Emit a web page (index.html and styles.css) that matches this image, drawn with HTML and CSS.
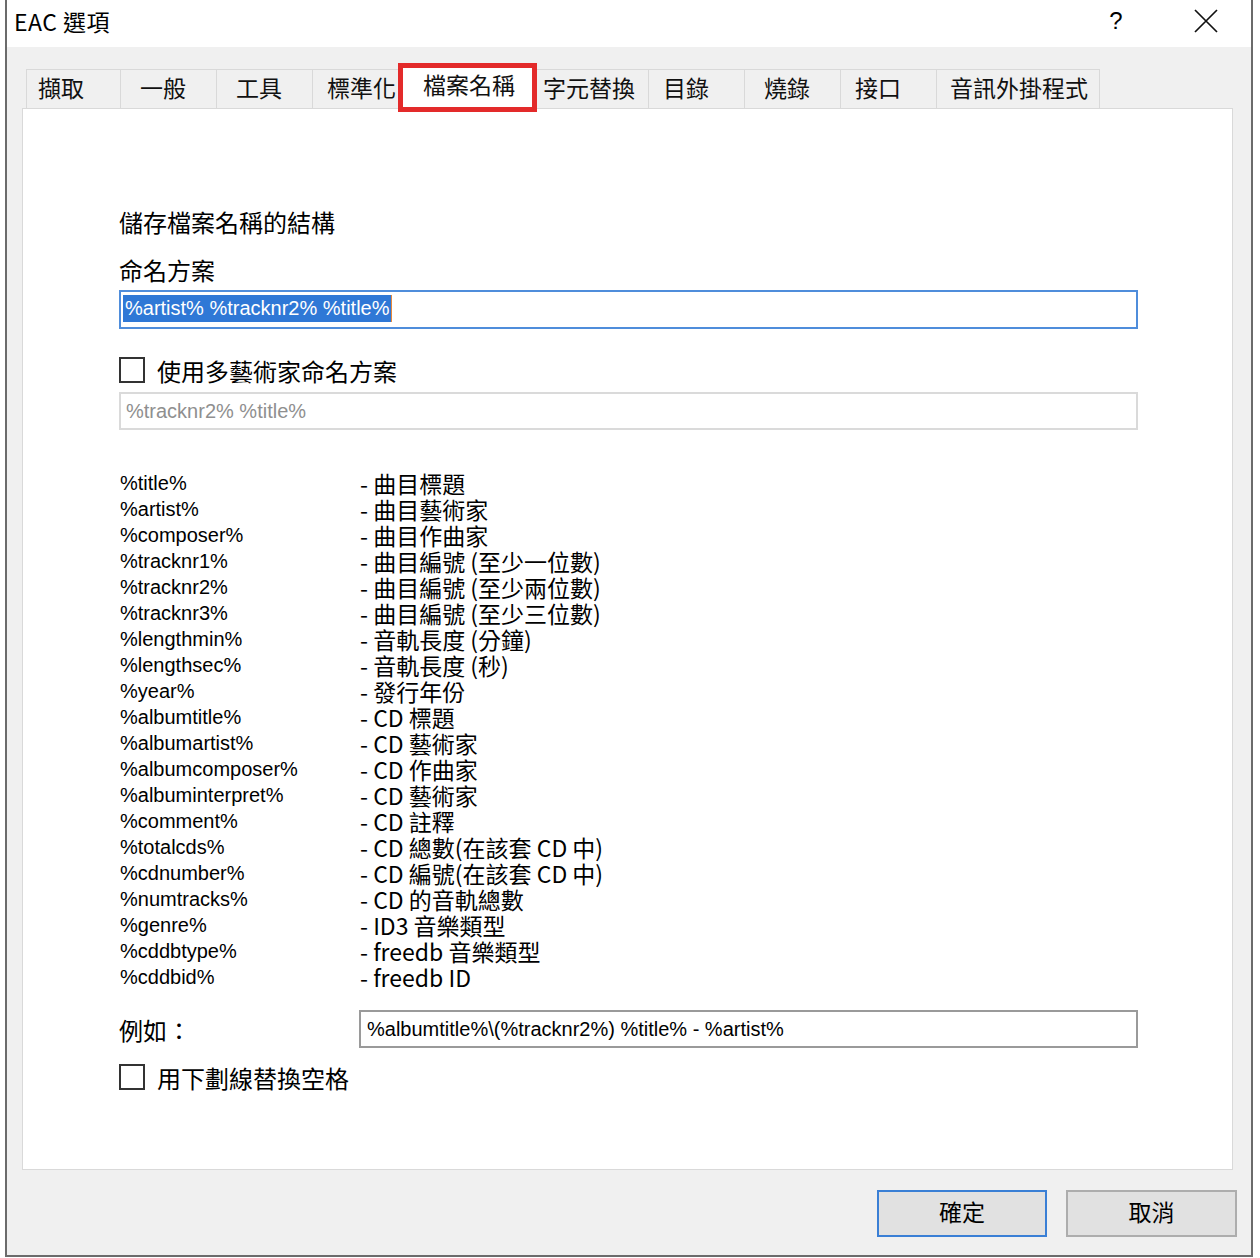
FILE: index.html
```html
<!DOCTYPE html>
<html lang="zh-Hant">

<head>
    <meta charset="UTF-8">
    <title>EAC 選項</title>
    <link rel="stylesheet" href="styles.css">
</head>

<body>
    <div class="window">
        <div class="titlebar">
            <span class="title">EAC 選項</span>
            <span class="help">?</span>
            <span class="close">
                <svg width="24" height="24" viewBox="0 0 24 24">
                    <path d="M1 1 L23 23 M23 1 L1 23" stroke="#111" stroke-width="1.7" fill="none" />
                </svg>
            </span>
        </div>

        <div class="main">
            <div class="tabs">
                <div class="tab t-first">擷取</div>
                <div class="tab">一般</div>
                <div class="tab">工具</div>
                <div class="tab t-narrow">標準化</div>
                <div class="tab active">檔案名稱</div>
                <div class="tab t-wide">字元替換</div>
                <div class="tab t-tight">目錄</div>
                <div class="tab">燒錄</div>
                <div class="tab t-tight">接口</div>
                <div class="tab t-last">音訊外掛程式</div>
            </div>

            <div class="panel">
                <div class="content">
                    <p class="heading">儲存檔案名稱的結構</p>
                    <p class="label">命名方案</p>
                    <div class="field focus"><span class="sel">%artist% %tracknr2% %title%</span></div>

                    <div class="check check-top"><span class="box"></span>使用多藝術家命名方案</div>
                    <div class="field disabled">%tracknr2% %title%</div>

                    <div class="vars">
                        <span class="var">%title%</span><span class="desc">- 曲目標題</span>
                        <span class="var">%artist%</span><span class="desc">- 曲目藝術家</span>
                        <span class="var">%composer%</span><span class="desc">- 曲目作曲家</span>
                        <span class="var">%tracknr1%</span><span class="desc">- 曲目編號 (至少一位數)</span>
                        <span class="var">%tracknr2%</span><span class="desc">- 曲目編號 (至少兩位數)</span>
                        <span class="var">%tracknr3%</span><span class="desc">- 曲目編號 (至少三位數)</span>
                        <span class="var">%lengthmin%</span><span class="desc">- 音軌長度 (分鐘)</span>
                        <span class="var">%lengthsec%</span><span class="desc">- 音軌長度 (秒)</span>
                        <span class="var">%year%</span><span class="desc">- 發行年份</span>
                        <span class="var">%albumtitle%</span><span class="desc">- CD 標題</span>
                        <span class="var">%albumartist%</span><span class="desc">- CD 藝術家</span>
                        <span class="var">%albumcomposer%</span><span class="desc">- CD 作曲家</span>
                        <span class="var">%albuminterpret%</span><span class="desc">- CD 藝術家</span>
                        <span class="var">%comment%</span><span class="desc">- CD 註釋</span>
                        <span class="var">%totalcds%</span><span class="desc">- CD 總數(在該套 CD 中)</span>
                        <span class="var">%cdnumber%</span><span class="desc">- CD 編號(在該套 CD 中)</span>
                        <span class="var">%numtracks%</span><span class="desc">- CD 的音軌總數</span>
                        <span class="var">%genre%</span><span class="desc">- ID3 音樂類型</span>
                        <span class="var">%cddbtype%</span><span class="desc">- freedb 音樂類型</span>
                        <span class="var">%cddbid%</span><span class="desc">- freedb ID</span>
                    </div>

                    <div class="example">
                        <span class="ex-label">例如：</span>
                        <div class="field plain">%albumtitle%\(%tracknr2%) %title% - %artist%</div>
                    </div>

                    <div class="check check-bottom"><span class="box"></span>用下劃線替換空格</div>
                </div>
            </div>

            <div class="buttons">
                <button class="btn default">確定</button>
                <button class="btn">取消</button>
            </div>
        </div>
    </div>
</body>

</html>
```

FILE: styles.css
```css
* {
    margin: 0;
    padding: 0;
    box-sizing: border-box;
}

body {
    background-color: #fff;
    color: #000;
    font-family: "Noto Sans CJK TC", "Liberation Sans", sans-serif;
}

.window {
    margin-left: 5px;
    width: 1248px;
    height: 1257px;
    border: 2px solid #6b6b6b;
    border-top: none;
    background-color: #f0f0f0;
}

/* 标题栏 */
.titlebar {
    height: 47px;
    background-color: #fff;
    display: flex;
    align-items: center;
    padding-left: 7px;
    padding-bottom: 5px;
}

.title {
    font-size: 23px;
    line-height: 30px;
    letter-spacing: 0.5px;
}

.help {
    margin-left: auto;
    width: 46px;
    margin-right: 22px;
    text-align: center;
    font-size: 24px;
    font-family: "Liberation Sans", sans-serif;
}

.close {
    width: 90px;
    height: 24px;
    display: flex;
    justify-content: center;
}

/* 选项卡 */
.tabs {
    display: flex;
    align-items: flex-end;
    height: 43px;
    margin-top: 18px;
    margin-left: 19px;
}

.tab {
    position: relative;
    width: 96px;
    height: 39px;
    padding-left: 19px;
    border: 1px solid #d9d9d9;
    border-right: none;
    border-bottom: none;
    font-size: 23px;
    line-height: 34px;
    color: #111;
}

.t-first {
    width: 94px;
    padding-left: 11px;
}

.t-narrow {
    width: 88px;
    padding-left: 14px;
}

.t-wide {
    width: 111px;
    border-left: none;
    padding-left: 6px;
}

.t-tight {
    padding-left: 14px;
}

.t-last {
    width: 164px;
    padding-left: 13px;
    border-right: 1px solid #d9d9d9;
}

.tab.active {
    width: 137px;
    height: 44px;
    padding-left: 22px;
    margin-bottom: -1px;
    background-color: #fff;
    border-right: 1px solid #d9d9d9;
    line-height: 36px;
    z-index: 2;
}

/* 红色标注框 */
.tab.active::after {
    content: "";
    position: absolute;
    left: -3px;
    right: -1px;
    top: -3px;
    bottom: -3px;
    border: 5px solid #e32a2a;
}

.panel {
    margin-left: 15px;
    width: 1211px;
    height: 1062px;
    background-color: #fff;
    border: 1px solid #d9d9d9;
}

.content {
    width: 1115px;
    padding-left: 96px;
    padding-top: 98px;
}

.heading,
.label {
    font-size: 24px;
    line-height: 30px;
}

.label {
    margin-top: 18px;
}

.field {
    width: 1019px;
    height: 39px;
    margin-top: 5px;
    padding-left: 5px;
    border: 2px solid #dadada;
    font-family: "Liberation Sans", sans-serif;
    font-size: 20px;
    line-height: 35px;
    white-space: nowrap;
}

.field.focus {
    border-color: #4f8ddb;
    padding-left: 2px;
}

.sel {
    display: inline-block;
    height: 27px;
    line-height: 27px;
    padding: 0 1px 0 2px;
    background-color: #2f78d6;
    color: #fff;
    border-right: 1px solid #e88a3c;
    vertical-align: 1px;
}

.field.disabled {
    height: 38px;
    margin-top: 7px;
    color: #8f8f8f;
}

.check {
    display: flex;
    align-items: center;
    height: 30px;
    font-size: 24px;
}

.check-top {
    margin-top: 26px;
}

.check-bottom {
    margin-top: 14px;
}

.box {
    width: 26px;
    height: 26px;
    margin-right: 12px;
    border: 2px solid #333;
    background-color: #fff;
}

/* 变量列表 */
.vars {
    display: grid;
    grid-template-columns: 241px 1fr;
    grid-auto-rows: 26px;
    margin-top: 40px;
    line-height: 26px;
}

.var {
    padding-left: 1px;
    font-family: "Liberation Sans", sans-serif;
    font-size: 20px;
}

.desc {
    font-size: 23px;
    white-space: nowrap;
}

.example {
    display: flex;
    align-items: center;
    margin-top: 20px;
}

.ex-label {
    width: 240px;
    font-size: 24px;
}

.field.plain {
    width: 779px;
    height: 38px;
    margin-top: 0;
    padding-left: 6px;
    border-color: #9a9a9a;
    line-height: 34px;
}

/* 底部按钮 */
.buttons {
    display: flex;
    justify-content: flex-end;
    gap: 19px;
    margin-top: 20px;
    padding-right: 14px;
}

.btn {
    width: 171px;
    height: 47px;
    padding-bottom: 5px;
    background-color: #e1e1e1;
    border: 2px solid #adadad;
    font-family: "Noto Sans CJK TC", sans-serif;
    font-size: 23px;
    color: #000;
}

.btn.default {
    width: 170px;
    border-color: #3a7fd5;
}
```
